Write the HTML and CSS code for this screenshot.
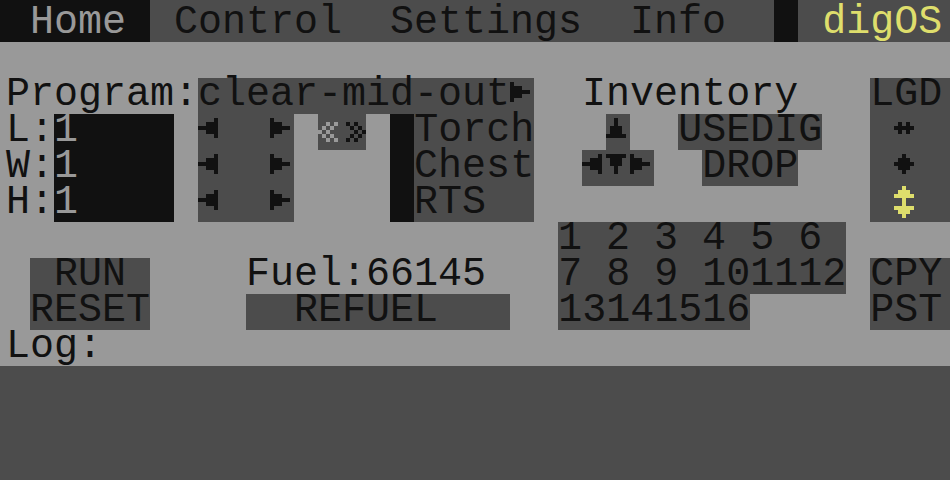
FILE: index.html
```html
<!DOCTYPE html>
<html>
<head>
<meta charset="utf-8">
<title>digOS</title>
<link rel="stylesheet" href="styles.css">
</head>
<body>
<div class="row hdr">
  <span class="bk t-lg"> Home </span><span class="gy"> Control  Settings  Info  </span><span class="bk"> </span><span class="gy t-yl"> digOS</span>
</div>
<div class="row"><span class="lg"> </span></div>
<div class="row">
  <span class="lg">Program:</span><span class="gy">clear-mid-out<svg class="ic" viewBox="0 0 6 9"><path d="M0 1h1v5H0z M1 2h2v3H1z M3 3h2v1H3z"/></svg></span><span class="lg">  Inventory   </span><span class="gy">LGD</span>
</div>
<div class="row">
  <span class="lg">L:</span><span class="bk"><span class="t-lg">1</span>    </span><span class="lg"> </span><span class="gy"><svg class="ic" viewBox="0 0 6 9"><path d="M4 1h1v5H4z M2 2h2v3H2z M0 3h2v1H0z"/></svg>  <svg class="ic" viewBox="0 0 6 9"><path d="M0 1h1v5H0z M1 2h2v3H1z M3 3h2v1H3z"/></svg></span><span class="lg"> </span><span class="gy"><svg class="ic t-lg" viewBox="0 0 6 9"><path d="M0 4h1v1H0z M1 3h1v1H1z M1 5h1v1H1z M2 2h1v1H2z M2 4h1v1H2z M2 6h1v1H2z M3 3h1v1H3z M3 5h1v1H3z M4 2h1v1H4z M4 6h1v1H4z"/></svg><svg class="ic" viewBox="0 0 6 9"><path d="M5 4h1v1H5z M4 3h1v1H4z M4 5h1v1H4z M3 2h1v1H3z M3 4h1v1H3z M3 6h1v1H3z M2 3h1v1H2z M2 5h1v1H2z M1 2h1v1H1z M1 6h1v1H1z"/></svg></span><span class="lg"> </span><span class="bk"> </span><span class="gy">Torch</span><span class="lg">   </span><span class="gy"><svg class="ic" viewBox="0 0 6 9"><path d="M2 1h1v2H2z M1 3h3v2H1z M0 5h5v1H0z"/></svg></span><span class="lg">  </span><span class="gy">USEDIG</span><span class="lg">  </span><span class="gy"> <svg class="ic" viewBox="0 0 6 9"><path d="M1 2h1v1H1z M3 2h1v1H3z M0 3h5v1H0z M1 4h1v1H1z M3 4h1v1H3z"/></svg> </span>
</div>
<div class="row">
  <span class="lg">W:</span><span class="bk"><span class="t-lg">1</span>    </span><span class="lg"> </span><span class="gy"><svg class="ic" viewBox="0 0 6 9"><path d="M4 1h1v5H4z M2 2h2v3H2z M0 3h2v1H0z"/></svg>  <svg class="ic" viewBox="0 0 6 9"><path d="M0 1h1v5H0z M1 2h2v3H1z M3 3h2v1H3z"/></svg></span><span class="lg">    </span><span class="bk"> </span><span class="gy">Chest</span><span class="lg">  </span><span class="gy"><svg class="ic" viewBox="0 0 6 9"><path d="M4 1h1v5H4z M2 2h2v3H2z M0 3h2v1H0z"/></svg><svg class="ic" viewBox="0 0 6 9"><path d="M0 1h5v1H0z M1 2h3v2H1z M2 4h1v2H2z"/></svg><svg class="ic" viewBox="0 0 6 9"><path d="M0 1h1v5H0z M1 2h2v3H1z M3 3h2v1H3z"/></svg></span><span class="lg">  </span><span class="gy">DROP</span><span class="lg">   </span><span class="gy"> <svg class="ic" viewBox="0 0 6 9"><path d="M2 1h1v1H2z M1 2h3v1H1z M0 3h5v1H0z M1 4h3v1H1z M2 5h1v1H2z"/></svg> </span>
</div>
<div class="row">
  <span class="lg">H:</span><span class="bk"><span class="t-lg">1</span>    </span><span class="lg"> </span><span class="gy"><svg class="ic" viewBox="0 0 6 9"><path d="M4 1h1v5H4z M2 2h2v3H2z M0 3h2v1H0z"/></svg>  <svg class="ic" viewBox="0 0 6 9"><path d="M0 1h1v5H0z M1 2h2v3H1z M3 3h2v1H3z"/></svg></span><span class="lg">    </span><span class="bk"> </span><span class="gy">RTS  </span><span class="lg">              </span><span class="gy"> <svg class="ic t-yl" viewBox="0 0 6 9"><path d="M2 0h1v1H2z M1 1h3v1H1z M0 2h5v1H0z M2 3h1v2H2z M0 5h5v1H0z M1 6h3v1H1z M2 7h1v1H2z"/></svg> </span>
</div>
<div class="row">
  <span class="lg">                       </span><span class="gy">1 2 3 4 5 6 </span><span class="lg"> </span>
</div>
<div class="row">
  <span class="lg"> </span><span class="gy"> RUN </span><span class="lg">    Fuel:66145   </span><span class="gy">7 8 9 101112</span><span class="lg"> </span><span class="gy">CPY</span>
</div>
<div class="row">
  <span class="lg"> </span><span class="gy">RESET</span><span class="lg">    </span><span class="gy">  REFUEL   </span><span class="lg">  </span><span class="gy">13141516</span><span class="lg">     </span><span class="gy">PST</span>
</div>
<div class="row">
  <span class="lg">Log:</span>
</div>
<div class="log"></div>
</body>
</html>
```
FILE: styles.css
```css
* {
  box-sizing: border-box;
}

body {
  margin: 0;
  width: 950px;
  height: 480px;
  overflow: hidden;
  background: #999999;
  color: #111111;
  font-family: "Liberation Mono", "DejaVu Sans Mono", monospace;
  font-size: 40px;
  display: flex;
  flex-direction: column;
}

.row {
  display: flex;
  flex: none;
  height: 36px;
}

.row > span {
  display: block;
  height: 100%;
  padding-top: 2px;
  line-height: 30px;
  white-space: pre;
}

.row > span:first-child {
  padding-left: 6px;
}

.row > span:last-child {
  flex: 1;
}

.hdr {
  height: 42px;
}

.hdr > span {
  padding-top: 8px;
}

.bk {
  background: #111111;
}

.gy {
  background: #4c4c4c;
}

.lg {
  background: #999999;
}

.t-lg {
  color: #999999;
}

.t-yl {
  color: #dede6c;
}

.ic {
  display: inline-block;
  width: 24px;
  height: 36px;
  margin-top: -2px;
  vertical-align: top;
  fill: currentColor;
  shape-rendering: crispEdges;
}

.log {
  flex: 1;
  background: #4c4c4c;
}
```
